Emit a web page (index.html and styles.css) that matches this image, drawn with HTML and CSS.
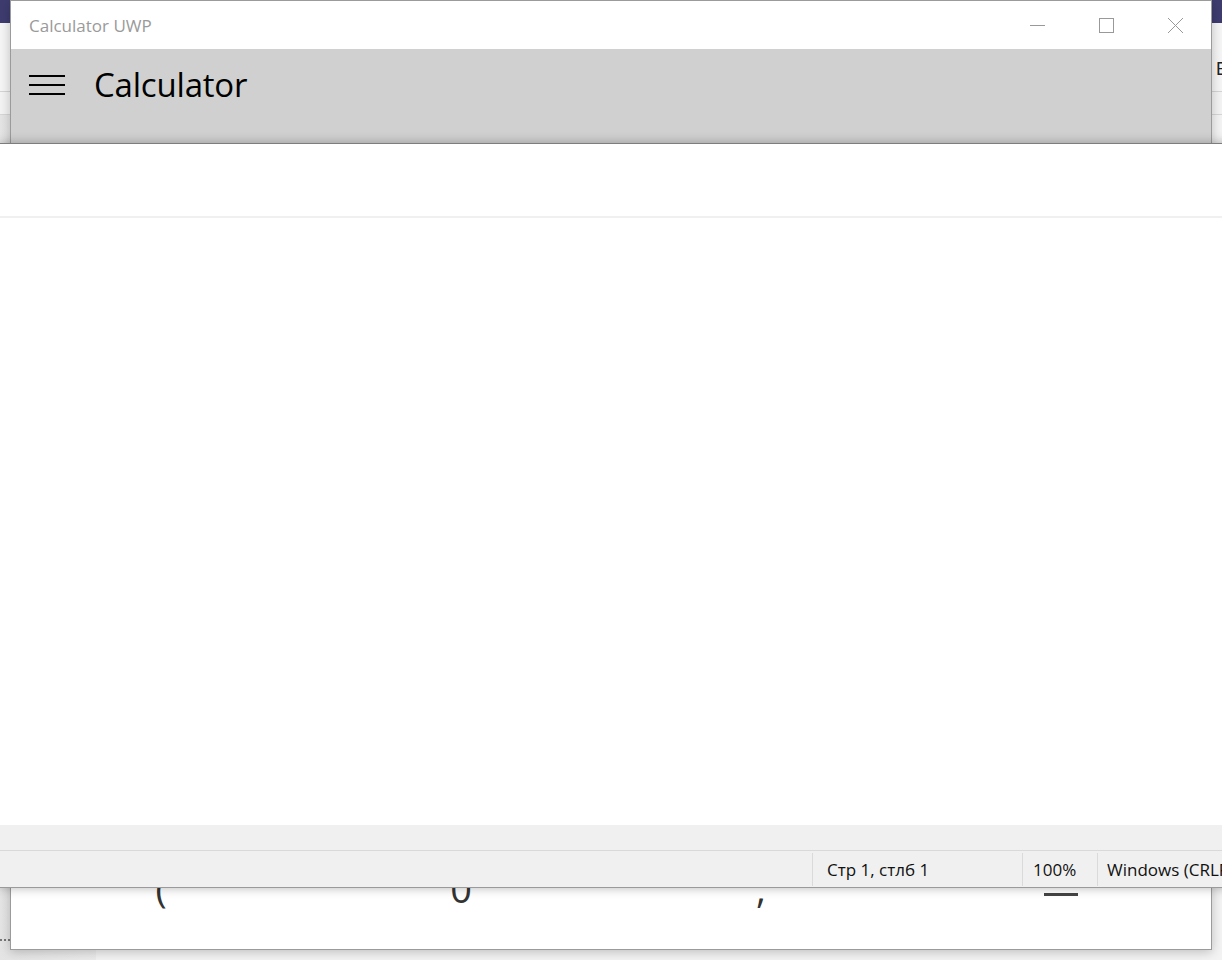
FILE: index.html
```
<!DOCTYPE html>
<html lang="ru">
<head>
<meta charset="utf-8">
<title>Calculator UWP</title>
<link rel="stylesheet" href="styles.css">
</head>
<body>
<div class="desktop">
  <div class="bgapp">
    <div class="bg-title"></div>
    <div class="bg-toolbar"><span class="bg-e">E</span></div>
    <div class="bg-row"></div>
    <div class="bg-body">
      <div class="bg-side"><span class="bg-dots"></span></div>
      <div class="bg-main"></div>
    </div>
  </div>

  <div class="calc">
    <div class="calc-titlebar">
      <span class="calc-apptitle">Calculator UWP</span>
      <div class="caption-btns">
        <span class="cap-btn"><svg width="16" height="16" viewBox="0 0 16 16"><path d="M1 8.5h15" stroke="#999" stroke-width="1" fill="none"/></svg></span>
        <span class="cap-btn"><svg width="16" height="16" viewBox="0 0 16 16"><rect x="1.5" y="1.5" width="14" height="14" stroke="#999" stroke-width="1" fill="none"/></svg></span>
        <span class="cap-btn"><svg width="16" height="16" viewBox="0 0 16 16"><path d="M1 1L16 16M16 1L1 16" stroke="#999" stroke-width="1" fill="none"/></svg></span>
      </div>
    </div>
    <div class="calc-header">
      <span class="hamburger"><i></i><i></i><i></i></span>
      <span class="calc-title">Calculator</span>
    </div>
    <div class="calc-body">
      <div class="keyrow">
        <span class="key">(</span>
        <span class="key">0</span>
        <span class="key">,</span>
        <span class="key"><i class="minus"></i></span>
      </div>
    </div>
  </div>

  <div class="notepad">
    <div class="np-top"></div>
    <div class="np-text"></div>
    <div class="np-hscroll"></div>
    <div class="np-status">
      <span class="st-cell st-blank"></span>
      <span class="st-cell st-pos">Стр 1, стлб 1</span>
      <span class="st-cell st-zoom">100%</span>
      <span class="st-cell st-eol">Windows (CRLF)</span>
      <span class="st-cell st-enc">UTF-8</span>
    </div>
  </div>
</div>
</body>
</html>
```

FILE: styles.css
```
html, body {
  margin: 0;
  padding: 0;
}
body {
  width: 1222px;
  height: 960px;
  overflow: hidden;
  font-family: "Open Sans", "Noto Sans", sans-serif;
}
.desktop {
  position: relative;
  width: 1222px;
  height: 960px;
  overflow: hidden;
  background: #f3f3f3;
}

/* background application */
.bgapp {
  position: absolute;
  left: 0;
  top: 0;
  width: 1222px;
  height: 960px;
  display: flex;
  flex-direction: column;
}
.bg-title {
  height: 23px;
  background: #3e3c6f;
}
.bg-toolbar {
  height: 68px;
  background: #f5f5f5;
  border-bottom: 1px solid #d4d4d4;
  padding-left: 1216px;
  display: flex;
  align-items: center;
  overflow: hidden;
}
.bg-e {
  font-family: "Liberation Sans", sans-serif;
  font-size: 18px;
  color: #222;
  margin-top: 24px;
}
.bg-row {
  height: 22px;
  background: #f3f3f3;
  border-bottom: 1px solid #d6d6d6;
}
.bg-body {
  flex: 1;
  display: flex;
}
.bg-side {
  width: 96px;
  background: linear-gradient(90deg, #e4e4e4, #ececec);
  position: relative;
}
.bg-dots {
  position: absolute;
  left: 0;
  top: 824px;
  width: 10px;
  border-top: 2px dotted #777;
}
.bg-main {
  flex: 1;
  background: #f3f3f3;
}

/* calculator window */
.calc {
  position: absolute;
  left: 10px;
  top: 0;
  width: 1200px;
  height: 948px;
  border: 1px solid #9b9b9b;
  background: #ffffff;
  box-shadow: 0 2px 10px rgba(0, 0, 0, 0.22);
  display: flex;
  flex-direction: column;
}
.calc-titlebar {
  height: 48px;
  display: flex;
  align-items: center;
  background: #ffffff;
}
.calc-apptitle {
  margin-left: 18px;
  font-size: 17px;
  color: #9a9a9a;
  margin-top: 1px;
}
.caption-btns {
  margin-left: auto;
  display: flex;
  margin-right: 2px;
}
.cap-btn {
  width: 69px;
  height: 48px;
  display: flex;
  align-items: center;
  justify-content: center;
}
.calc-header {
  height: 94px;
  background: #d0d0d0;
  display: flex;
  align-items: center;
}
.hamburger {
  margin-left: 18px;
  width: 36px;
  height: 20px;
  display: flex;
  flex-direction: column;
  justify-content: space-between;
  margin-top: -22px;
}
.hamburger i {
  display: block;
  height: 2px;
  background: #000;
}
.calc-title {
  margin-left: 29px;
  font-size: 33px;
  color: #000;
  margin-top: -24px;
  letter-spacing: -0.2px;
}
.calc-body {
  flex: 1;
  display: flex;
  flex-direction: column;
  justify-content: flex-end;
}
.keyrow {
  height: 98px;
  padding-bottom: 12px;
  display: grid;
  grid-template-columns: repeat(4, 1fr);
  align-items: center;
}
.key {
  text-align: center;
  font-size: 38px;
  line-height: 1;
  color: #333;
  display: flex;
  justify-content: center;
  align-items: center;
  height: 40px;
}
.minus {
  display: block;
  width: 34px;
  height: 3px;
  background: #444;
  margin-top: 12px;
}

/* notepad window */
.notepad {
  position: absolute;
  left: 0;
  top: 143px;
  width: 1240px;
  height: 743px;
  border-top: 1px solid #7d7d7d;
  border-bottom: 1px solid #9a9a9a;
  background: #ffffff;
  box-shadow: 0 0 10px rgba(0, 0, 0, 0.28);
  display: flex;
  flex-direction: column;
}
.np-top {
  height: 72px;
  border-bottom: 2px solid #f0f0f0;
}
.np-text {
  flex: 1;
  background: #ffffff;
}
.np-hscroll {
  height: 25px;
  background: #f0f0f0;
}
.np-status {
  height: 36px;
  background: #f0f0f0;
  border-top: 1px solid #d9d9d9;
  display: grid;
  grid-template-columns: 812px 210px 75px 160px 1fr;
  font-size: 17px;
  color: #111;
}
.st-cell {
  display: flex;
  align-items: center;
  border-left: 1px solid #dadada;
  white-space: nowrap;
  margin: 2px 0 1px;
}
.st-blank {
  border-left: none;
}
.st-pos {
  padding-left: 14px;
}
.st-zoom {
  padding-left: 10px;
}
.st-eol {
  padding-left: 9px;
}
.st-enc {
  padding-left: 10px;
}
```
